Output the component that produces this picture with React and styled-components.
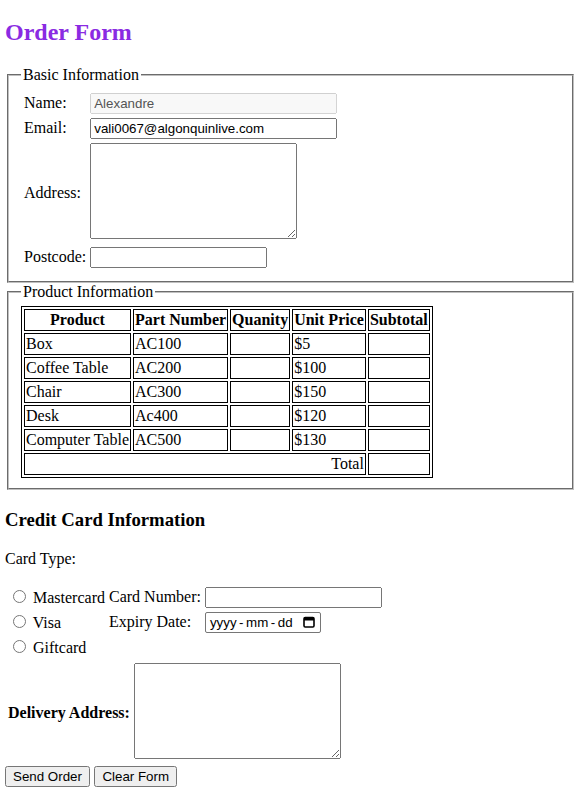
import React from 'react';
import styled, { createGlobalStyle } from 'styled-components';

const GlobalStyle = createGlobalStyle`
  body {
    margin: 5px;
    background: #fff;
    color: #000;
    font-family: "Liberation Serif", "Times New Roman", serif;
    font-size: 16px;
  }
`;

const products = [
  { name: 'Box', part: 'AC100', price: '$5' },
  { name: 'Coffee Table', part: 'AC200', price: '$100' },
  { name: 'Chair', part: 'AC300', price: '$150' },
  { name: 'Desk', part: 'Ac400', price: '$120' },
  { name: 'Computer Table', part: 'AC500', price: '$130' },
];

const App = () => {
  return (
    <>
      <GlobalStyle />
      <Title>Order Form</Title>

      <Fieldset>
        <Legend>Basic Information</Legend>
        <FieldGrid>
          <span>Name:</span>
          <TextInput $width={247} value="Alexandre" disabled readOnly />
          <span>Email:</span>
          <TextInput $width={247} defaultValue="vali0067@algonquinlive.com" />
          <span>Address:</span>
          <TextArea />
          <span>Postcode:</span>
          <TextInput $width={177} />
        </FieldGrid>
      </Fieldset>

      <Fieldset>
        <Legend>Product Information</Legend>
        <ProductTable>
          <thead>
            <tr>
              <Th>Product</Th>
              <Th>Part Number</Th>
              <Th>Quanity</Th>
              <Th>Unit Price</Th>
              <Th>Subtotal</Th>
            </tr>
          </thead>
          <tbody>
            {products.map((p) => (
              <tr key={p.part}>
                <Td>{p.name}</Td>
                <Td>{p.part}</Td>
                <Td></Td>
                <Td>{p.price}</Td>
                <Td></Td>
              </tr>
            ))}
            <tr>
              <Td colSpan={4} $right>Total</Td>
              <Td></Td>
            </tr>
          </tbody>
        </ProductTable>
      </Fieldset>

      <SubTitle>Credit Card Information</SubTitle>
      <Para>Card Type:</Para>

      <CardGrid>
        <RadioLabel>
          <Radio type="radio" name="card" /> Mastercard
        </RadioLabel>
        <span>Card Number:</span>
        <TextInput $width={177} />

        <RadioLabel>
          <Radio type="radio" name="card" /> Visa
        </RadioLabel>
        <span>Expiry Date:</span>
        <DateBox>
          <DateText>
            yyyy<Sep>-</Sep>mm<Sep>-</Sep>dd
          </DateText>
          <CalendarIcon width="12" height="12" viewBox="0 0 12 12">
            <rect x="1" y="1.5" width="10" height="9.5" rx="1.2" fill="none" stroke="#000" strokeWidth="1.6" />
            <rect x="1" y="1.5" width="10" height="3" fill="#000" />
          </CalendarIcon>
        </DateBox>

        <RadioLabel>
          <Radio type="radio" name="card" /> Giftcard
        </RadioLabel>
      </CardGrid>

      <DeliveryGrid>
        <DeliveryLabel>Delivery Address:</DeliveryLabel>
        <TextArea />
      </DeliveryGrid>

      <Buttons>
        <Button type="submit">Send Order</Button>
        <Button type="reset">Clear Form</Button>
      </Buttons>
    </>
  );
};

export default App;

const Title = styled.h2`
  margin: 14px 0 19.92px;
  font-size: 24px;
  font-weight: bold;
  color: #8a2be2;
`;

const Fieldset = styled.fieldset`
  margin: 0 2px;
  padding: 5.6px 12px 10px;
  border: 2px groove rgb(192, 192, 192);
  min-inline-size: min-content;
`;

const Legend = styled.legend`
  padding: 0 2px;
`;

const FieldGrid = styled.div`
  display: grid;
  grid-template-columns: max-content max-content;
  column-gap: 4px;
  row-gap: 4px;
  align-items: center;
  padding: 3px;
`;

const TextInput = styled.input`
  box-sizing: border-box;
  width: ${(p) => p.$width}px;
  height: 21px;
  margin: 0;
  font-family: "Liberation Sans", Arial, sans-serif;
  font-size: 13.333px;
`;

const TextArea = styled.textarea`
  display: block;
  box-sizing: border-box;
  width: 207px;
  height: 96px;
  margin: 0 0 4px;
  font-family: "Liberation Mono", monospace;
  font-size: 13.333px;
`;

const ProductTable = styled.table`
  border: 1px solid #000;
  border-spacing: 2px;
`;

const Th = styled.th`
  border: 1px solid #000;
  padding: 1px;
  font-weight: bold;
  text-align: center;
`;

const Td = styled.td`
  border: 1px solid #000;
  padding: 1px;
  text-align: ${(p) => (p.$right ? 'right' : 'left')};
`;

const SubTitle = styled.h3`
  margin: 18.72px 0;
  font-size: 18.72px;
  font-weight: bold;
`;

const Para = styled.p`
  margin: 16px 0;
`;

const CardGrid = styled.div`
  display: grid;
  grid-template-columns: max-content max-content max-content;
  column-gap: 4px;
  row-gap: 4px;
  align-items: center;
  padding: 3px;
`;

const RadioLabel = styled.label`
  grid-column: 1;
`;

const Radio = styled.input`
  margin: 3px 3px 0 5px;
`;

const DateBox = styled.label`
  box-sizing: border-box;
  display: flex;
  align-items: center;
  justify-content: space-between;
  width: 116px;
  height: 21px;
  padding: 0 5px 0 4px;
  border: 1px solid #767676;
  border-radius: 2px;
  background: #fff;
  font-family: "Liberation Sans", Arial, sans-serif;
  font-size: 13.333px;
`;

const DateText = styled.span`
  display: flex;
`;

const Sep = styled.span`
  margin: 0 2.5px;
`;

const CalendarIcon = styled.svg`
  display: block;
`;

const DeliveryGrid = styled.div`
  display: grid;
  grid-template-columns: max-content max-content;
  column-gap: 4px;
  align-items: center;
  padding: 3px;
`;

const DeliveryLabel = styled.span`
  font-weight: bold;
  text-align: center;
`;

const Buttons = styled.div`
  display: flex;
  gap: 4.5px;
`;

const Button = styled.button`
  margin: 0;
  font-family: "Liberation Sans", Arial, sans-serif;
  font-size: 13.333px;
`;
